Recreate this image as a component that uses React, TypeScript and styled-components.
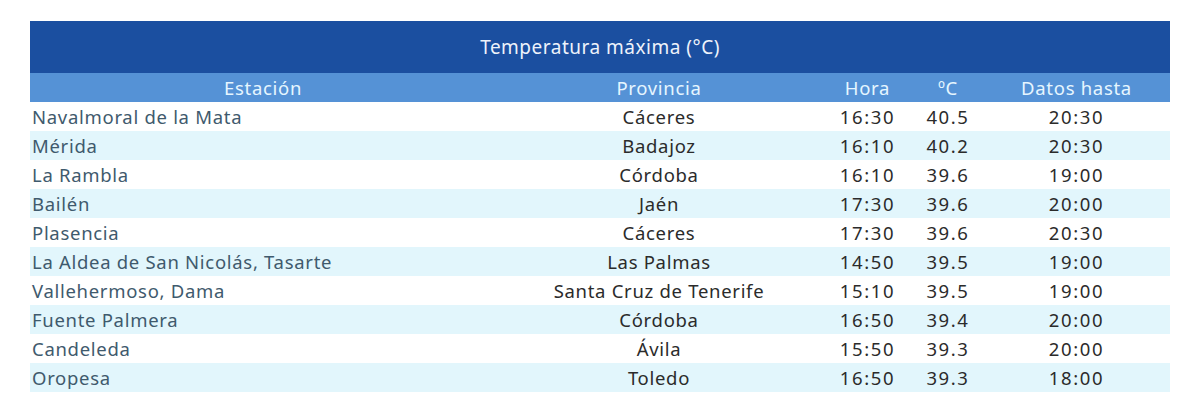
import styled, { createGlobalStyle } from 'styled-components';

const GlobalStyle = createGlobalStyle`
  body {
    margin: 0;
    background: #ffffff;
    font-family: "Noto Sans", "Open Sans", sans-serif;
  }
`;

const Page = styled.div`
  padding: 21px 30px 0 30px;
`;

const Table = styled.table`
  width: 1140px;
  border-collapse: collapse;
  table-layout: fixed;
  font-size: 18.5px;
  letter-spacing: 0.7px;
`;

const TitleCell = styled.th`
  height: 52px;
  padding: 0;
  background: #1b4fa0;
  color: #eef3fb;
  font-weight: 400;
  font-size: 19px;
  letter-spacing: 0.5px;
  text-align: center;
`;

const HeadCell = styled.th`
  height: 29px;
  padding: 0 2px;
  background: #5592d6;
  color: #e6f6ff;
  font-weight: 400;
  text-align: center;
`;

const Row = styled.tr<{ $striped: boolean }>`
  height: 29px;
  background: ${(p) => (p.$striped ? '#e2f6fc' : '#ffffff')};
`;

const Cell = styled.td<{ $station?: boolean; $num?: boolean }>`
  padding: 0 2px;
  color: ${(p) => (p.$station ? '#3f5a6d' : '#2b2b2b')};
  text-align: ${(p) => (p.$station ? 'left' : 'center')};
  letter-spacing: ${(p) => (p.$num ? '1.6px' : '0.7px')};
  white-space: nowrap;
`;

const columns = [466, 326, 91, 70, 187];

const rows = [
  ['Navalmoral de la Mata', 'Cáceres', '16:30', '40.5', '20:30'],
  ['Mérida', 'Badajoz', '16:10', '40.2', '20:30'],
  ['La Rambla', 'Córdoba', '16:10', '39.6', '19:00'],
  ['Bailén', 'Jaén', '17:30', '39.6', '20:00'],
  ['Plasencia', 'Cáceres', '17:30', '39.6', '20:30'],
  ['La Aldea de San Nicolás, Tasarte', 'Las Palmas', '14:50', '39.5', '19:00'],
  ['Vallehermoso, Dama', 'Santa Cruz de Tenerife', '15:10', '39.5', '19:00'],
  ['Fuente Palmera', 'Córdoba', '16:50', '39.4', '20:00'],
  ['Candeleda', 'Ávila', '15:50', '39.3', '20:00'],
  ['Oropesa', 'Toledo', '16:50', '39.3', '18:00'],
];

export default function App() {
  return (
    <Page>
      <GlobalStyle />
      <Table>
        <colgroup>
          {columns.map((w, i) => (
            <col key={i} style={{ width: w }} />
          ))}
        </colgroup>
        <thead>
          <tr>
            <TitleCell colSpan={5}>Temperatura máxima (°C)</TitleCell>
          </tr>
          <tr>
            <HeadCell>Estación</HeadCell>
            <HeadCell>Provincia</HeadCell>
            <HeadCell>Hora</HeadCell>
            <HeadCell>ºC</HeadCell>
            <HeadCell>Datos hasta</HeadCell>
          </tr>
        </thead>
        <tbody>
          {rows.map((r, i) => (
            <Row key={r[0]} $striped={i % 2 === 1}>
              <Cell $station>{r[0]}</Cell>
              <Cell>{r[1]}</Cell>
              <Cell $num>{r[2]}</Cell>
              <Cell $num>{r[3]}</Cell>
              <Cell $num>{r[4]}</Cell>
            </Row>
          ))}
        </tbody>
      </Table>
    </Page>
  );
}
